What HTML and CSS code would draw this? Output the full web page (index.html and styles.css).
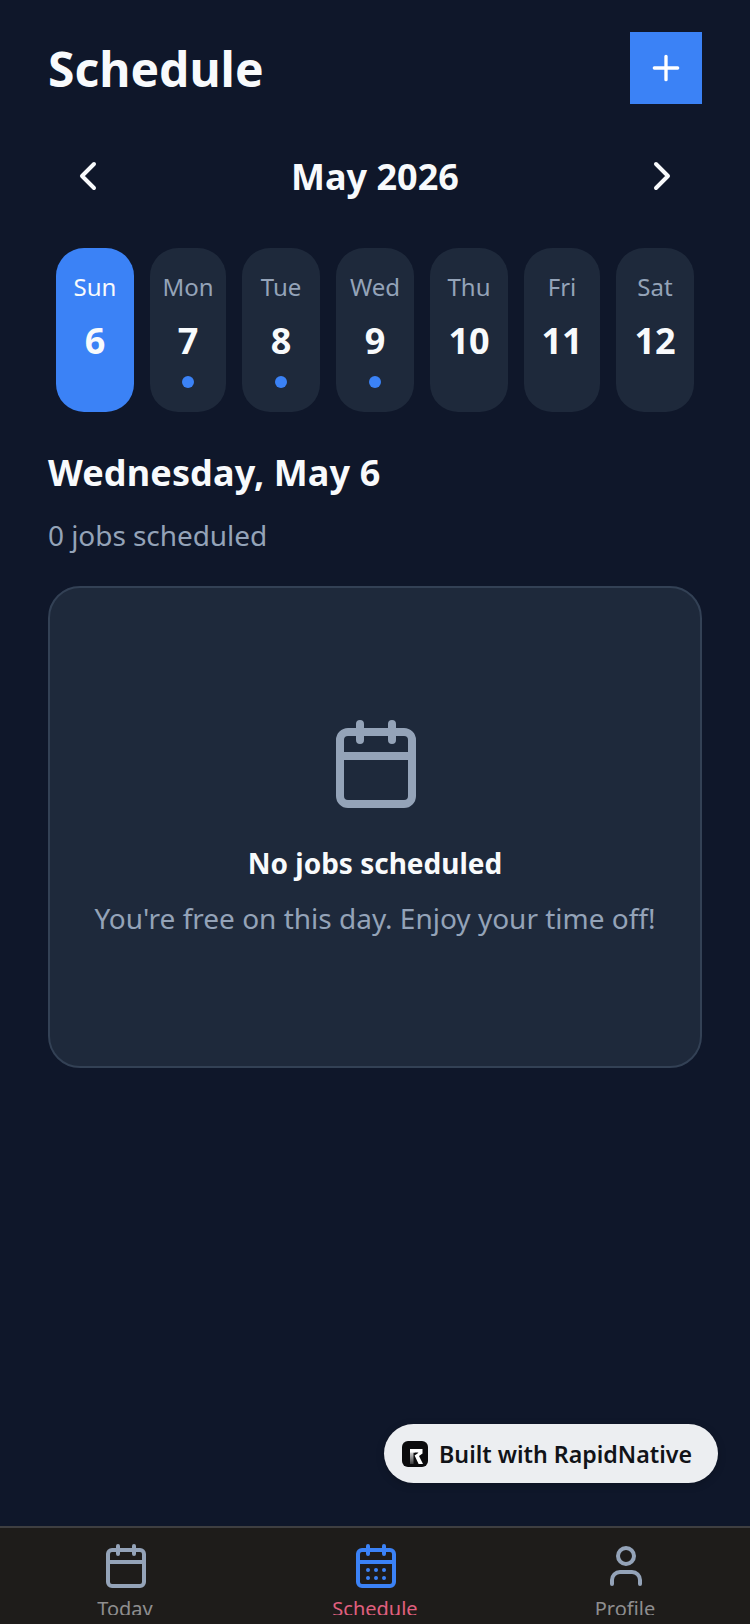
FILE: index.html
```html
<!DOCTYPE html>
<html lang="en">
<head>
    <meta charset="UTF-8">
    <meta name="viewport" content="width=device-width, initial-scale=1.0">
    <title>Schedule</title>
    <link rel="stylesheet" href="styles.css">
</head>
<body>
    <main class="screen">
        <header class="top">
            <h1>Schedule</h1>
            <button class="add">
                <svg class="icon" width="40" height="40" viewBox="0 0 24 24"><path d="M5 12h14M12 5v14"/></svg>
            </button>
        </header>

        <div class="month">
            <svg class="icon" width="48" height="48" viewBox="0 0 24 24"><path d="m15 18-6-6 6-6"/></svg>
            <h2>May 2026</h2>
            <svg class="icon" width="48" height="48" viewBox="0 0 24 24"><path d="m9 18 6-6-6-6"/></svg>
        </div>

        <div class="days">
            <div class="day active"><span class="name">Sun</span><span class="num">6</span></div>
            <div class="day has-job"><span class="name">Mon</span><span class="num">7</span></div>
            <div class="day has-job"><span class="name">Tue</span><span class="num">8</span></div>
            <div class="day has-job"><span class="name">Wed</span><span class="num">9</span></div>
            <div class="day"><span class="name">Thu</span><span class="num">10</span></div>
            <div class="day"><span class="name">Fri</span><span class="num">11</span></div>
            <div class="day"><span class="name">Sat</span><span class="num">12</span></div>
        </div>

        <section class="jobs">
            <h3>Wednesday, May 6</h3>
            <p class="count">0 jobs scheduled</p>
            <div class="empty">
                <svg class="icon" width="96" height="96" viewBox="0 0 24 24">
                    <path d="M8 2v4M16 2v4M3 10h18"/>
                    <rect x="3" y="4" width="18" height="18" rx="2"/>
                </svg>
                <h4>No jobs scheduled</h4>
                <p>You're free on this day. Enjoy your time off!</p>
            </div>
        </section>

        <a class="built">
            <svg class="logo" width="26" height="26" viewBox="0 0 26 26">
                <defs>
                    <linearGradient id="stem" x1="0" y1="0" x2="0" y2="1">
                        <stop offset="0" stop-color="#fff"/>
                        <stop offset="1" stop-color="#3a3a3c"/>
                    </linearGradient>
                </defs>
                <rect width="26" height="26" rx="6" fill="#0b0b0d"/>
                <path d="M8 8h5v3.5h-1.5V23H8z" fill="url(#stem)"/>
                <path d="M8 8h12.5v4.6L17 15l4 8h-4.4l-4-8.6 3.6-2.4v-.5H8z" fill="#fff"/>
            </svg>
            <span>Built with RapidNative</span>
        </a>

        <nav class="tabs">
            <div class="tab">
                <svg class="icon" width="48" height="48" viewBox="0 0 24 24">
                    <path d="M8 2v4M16 2v4M3 10h18"/>
                    <rect x="3" y="4" width="18" height="18" rx="2"/>
                </svg>
                <span>Today</span>
            </div>
            <div class="tab current">
                <svg class="icon" width="48" height="48" viewBox="0 0 24 24">
                    <path d="M8 2v4M16 2v4M3 10h18M8 14h.01M12 14h.01M16 14h.01M8 18h.01M12 18h.01M16 18h.01"/>
                    <rect x="3" y="4" width="18" height="18" rx="2"/>
                </svg>
                <span>Schedule</span>
            </div>
            <div class="tab">
                <svg class="icon" width="48" height="48" viewBox="0 0 24 24">
                    <path d="M19 21v-2a4 4 0 0 0-4-4H9a4 4 0 0 0-4 4v2"/>
                    <circle cx="12" cy="7" r="4"/>
                </svg>
                <span>Profile</span>
            </div>
        </nav>
    </main>
</body>
</html>
```

FILE: styles.css
```css
* {
    box-sizing: border-box;
    margin: 0;
}

body {
    background: #0f172a;
    font-family: "Noto Sans", sans-serif;
    color: #f8fafc;
}

.screen {
    position: relative;
    display: flex;
    flex-direction: column;
    height: 1624px;
    overflow: hidden;
}

.icon {
    fill: none;
    stroke: currentColor;
    stroke-width: 2;
    stroke-linecap: round;
    stroke-linejoin: round;
    display: block;
    flex-shrink: 0;
}

/* header */
.top {
    display: flex;
    justify-content: space-between;
    align-items: center;
    padding: 32px 48px 0;
}

.top h1 {
    padding-top: 1px;
    font-size: 48px;
    line-height: 71px;
    font-weight: 700;
}

.add {
    display: flex;
    align-items: center;
    justify-content: center;
    width: 72px;
    height: 72px;
    padding: 0;
    border: 0;
    background: #3b82f6;
    color: #fff;
}

/* month row */
.month {
    display: flex;
    justify-content: space-between;
    align-items: center;
    padding: 0 64px;
    margin-top: 48px;
}

.month h2 {
    padding-top: 2px;
    font-size: 36px;
    line-height: 46px;
    font-weight: 700;
}

/* day strip */
.days {
    display: grid;
    grid-template-columns: 78px 76px 78px 78px 78px 76px 78px;
    gap: 16px;
    padding: 0 56px;
    margin-top: 48px;
}

.day {
    display: flex;
    flex-direction: column;
    align-items: center;
    height: 164px;
    padding-top: 23px;
    border-radius: 28px;
    background: #1e293b;
}

.day .name {
    font-size: 24px;
    line-height: 32px;
    color: #94a3b8;
}

.day .num {
    margin-top: 14px;
    font-size: 36px;
    line-height: 48px;
    font-weight: 700;
}

.day.has-job::after {
    content: "";
    width: 12px;
    height: 12px;
    margin-top: 11px;
    border-radius: 50%;
    background: #3b82f6;
}

.day.active {
    background: #3b82f6;
}

.day.active .name {
    color: #f8fafc;
}

/* selected date */
.jobs {
    padding: 0 48px;
    margin-top: 36px;
}

.jobs h3 {
    font-size: 36px;
    line-height: 50px;
    font-weight: 700;
    letter-spacing: 0.13px;
}

.count {
    margin-top: 17px;
    font-size: 28px;
    line-height: 40px;
    letter-spacing: -0.06px;
    color: #94a3b8;
}

.empty {
    display: flex;
    flex-direction: column;
    align-items: center;
    height: 482px;
    padding-top: 128px;
    margin-top: 31px;
    border: 2px solid #334155;
    border-radius: 32px;
    background: #1e293b;
}

.empty .icon {
    margin-left: 2px;
    color: #94a3b8;
}

.empty h4 {
    margin-top: 31px;
    font-size: 28px;
    line-height: 40px;
    font-weight: 700;
}

.empty p {
    margin-top: 15px;
    font-size: 28px;
    line-height: 40px;
    color: #94a3b8;
}

/* floating badge */
.built {
    position: absolute;
    right: 32px;
    top: 1424px;
    display: flex;
    align-items: center;
    gap: 11px;
    height: 59px;
    padding: 0 26px 0 18px;
    border-radius: 30px;
    background: #eceef1;
    color: #111318;
    font-size: 23.2px;
    font-weight: 600;
    box-shadow: 0 2px 8px rgba(0, 0, 0, 0.2);
}

/* tab bar */
.tabs {
    display: flex;
    margin-top: auto;
    height: 98px;
    padding-top: 14px;
    border-top: 2px solid #3f3f41;
    background: #1e1c1a;
}

.tab {
    flex: 1;
    display: flex;
    flex-direction: column;
    align-items: center;
    height: 73px;
    overflow: hidden;
    color: #94a3b8;
}

.tab .icon {
    margin-left: 2px;
}

.tab span {
    margin-top: 4px;
    font-size: 20px;
    line-height: 30px;
    color: #8e8e8f;
}

.tab.current {
    color: #3b82f6;
}

.tab.current span {
    color: #e0607f;
}
```
